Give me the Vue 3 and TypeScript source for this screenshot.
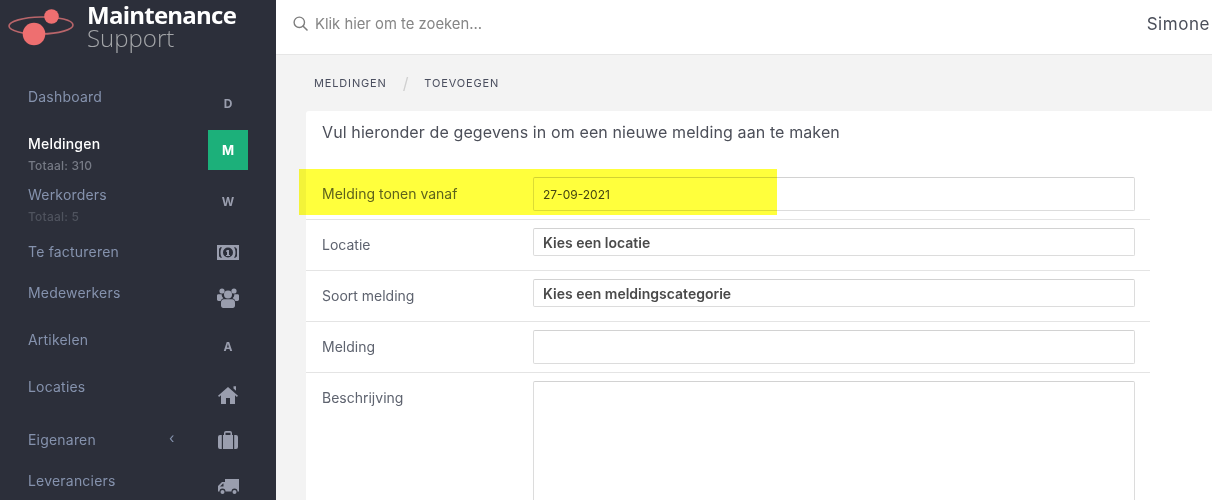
<script setup lang="ts">
interface NavItem {
  label: string
  sub?: string
  icon: string
  kind: 'letter' | 'svg'
  gap: number
  labelTop: number
  active?: boolean
  chevron?: boolean
}

const items: NavItem[] = [
  { label: 'Dashboard', icon: 'D', kind: 'letter', gap: 0, labelTop: 4 },
  { label: 'Meldingen', sub: 'Totaal: 310', icon: 'M', kind: 'letter', gap: 7, labelTop: 4, active: true },
  { label: 'Werkorders', sub: 'Totaal: 5', icon: 'W', kind: 'letter', gap: 11, labelTop: 4 },
  { label: 'Te factureren', icon: 'money', kind: 'svg', gap: 11, labelTop: 10 },
  { label: 'Medewerkers', icon: 'users', kind: 'svg', gap: 6, labelTop: 5 },
  { label: 'Artikelen', icon: 'A', kind: 'letter', gap: 8, labelTop: 4 },
  { label: 'Locaties', icon: 'home', kind: 'svg', gap: 9, labelTop: 2 },
  { label: 'Eigenaren', icon: 'case', kind: 'svg', gap: 5, labelTop: 10, chevron: true },
  { label: 'Leveranciers', icon: 'truck', kind: 'svg', gap: 7, labelTop: 4 },
]
</script>

<template>
  <div class="app">
    <aside class="sidebar">
      <div class="logo">
        <svg class="logo-mark" width="76" height="54" viewBox="0 0 76 54">
          <ellipse cx="41" cy="25.5" rx="32" ry="8.5" transform="rotate(-1 41 25.5)" fill="none" stroke="#b9656a" stroke-width="1.6" />
          <circle cx="34" cy="34" r="11.3" fill="#ee6f70" />
          <circle cx="51.5" cy="16.5" r="7.3" fill="#ee6f70" />
        </svg>
        <div class="logo-text">
          <div class="logo-top">Maintenance</div>
          <div class="logo-bottom">Support</div>
        </div>
      </div>
      <nav class="nav">
        <div
          v-for="item in items"
          :key="item.label"
          class="nav-item"
          :style="{ marginTop: item.gap + 'px' }"
        >
          <div class="nav-text" :style="{ paddingTop: item.labelTop + 'px' }">
            <div class="nav-label" :class="{ active: item.active }">{{ item.label }}</div>
            <div v-if="item.sub" class="nav-sub" :class="{ active: item.active }">{{ item.sub }}</div>
          </div>
          <span v-if="item.chevron" class="chev">‹</span>
          <div class="nav-icon" :class="{ active: item.active }">
            <template v-if="item.kind === 'letter'">{{ item.icon }}</template>
            <svg v-else-if="item.icon === 'money'" class="i-money" width="22" height="15" viewBox="0 0 22 15">
              <path fill-rule="evenodd" fill="#9a9eae" d="M0 0h22v15H0zM5 2.200H3.200A1.500 1.500 0 0 1 2 3.600v7.800c.9.1 1.400.7 1.400 1.400H5C3.900 11.400 3.500 9.500 3.500 7.500S3.900 3.600 5 2.200zM17 2.200c1.100 1.400 1.500 3.300 1.500 5.300s-.4 3.900-1.500 5.300h1.600c0-.7.5-1.300 1.400-1.400V3.600c-.9-.1-1.400-.7-1.400-1.400zM11 2.500a5 5 0 1 0 0 10 5 5 0 0 0 0-10z" />
              <path fill="#9a9eae" d="M10 5h2v5h1v1H9v-1h1V6.500L9 7V6z" />
            </svg>
            <svg v-else-if="item.icon === 'users'" class="i-users" width="22" height="20" viewBox="0 0 22 20">
              <g fill="#9a9eae">
                <circle cx="5" cy="3" r="2.600" />
                <circle cx="17" cy="3" r="2.600" />
                <circle cx="11" cy="6.500" r="4" />
                <path d="M0 7.500c0-.8.8-1.200 1.500-1.200h3.200c-.1 1.500.5 3 1.700 3.900-1.300.4-2.300 1.400-2.700 2.700H1.500C.7 12.900 0 12.300 0 11.500zM22 7.500c0-.8-.8-1.200-1.500-1.200h-3.200c.1 1.500-.5 3-1.700 3.900 1.300.4 2.300 1.400 2.700 2.700h2.200c.8 0 1.500-.6 1.500-1.400z" />
                <path d="M7 11.200h8c1.800 0 3 1.400 3 3.200v3.400c0 1.200-1 2.200-2.200 2.200H6.200C5 20 4 19 4 17.800v-3.400c0-1.800 1.200-3.200 3-3.200z" />
              </g>
            </svg>
            <svg v-else-if="item.icon === 'home'" class="i-home" width="20" height="18" viewBox="0 0 20 18">
              <path fill="#9a9eae" d="M10 1 0 9.700l1.100 1.200L3 9.300V18h5v-6h4v6h5V9.300l1.900 1.600 1.100-1.200zM15.500 .3h2.500v4.500l-2.500-2.200z" />
            </svg>
            <svg v-else-if="item.icon === 'case'" class="i-case" width="20" height="18" viewBox="0 0 20 18">
              <path fill-rule="evenodd" fill="#9a9eae" d="M6 4V2a2 2 0 0 1 2-2h4a2 2 0 0 1 2 2v2h1v14H5V4zM7.500 4h5V1.800h-5zM3.800 4v14H2a2 2 0 0 1-2-2V6a2 2 0 0 1 2-2zM16.200 4H18a2 2 0 0 1 2 2v10a2 2 0 0 1-2 2h-1.800z" />
            </svg>
            <svg v-else class="i-truck" width="21" height="16" viewBox="0 0 21 16">
              <path fill-rule="evenodd" fill="#9a9eae" d="M7 0h14v12.500h-1.500a3 3 0 0 0-6 0H7.500a3 3 0 0 0-6 0H0V7l4-4h3zM5 4.500 2 7.500h3.500v-3z" />
              <circle cx="4.500" cy="13" r="2" fill="#9a9eae" />
              <circle cx="16.500" cy="13" r="2" fill="#9a9eae" />
            </svg>
          </div>
        </div>
      </nav>
    </aside>

    <main class="main">
      <header class="topbar">
        <svg class="search-icon" width="15" height="15" viewBox="0 0 15 15">
          <circle cx="6.300" cy="6.300" r="5.200" fill="none" stroke="#7d7d7d" stroke-width="1.400" />
          <path d="M10.200 10.200 14 14" stroke="#7d7d7d" stroke-width="1.600" stroke-linecap="round" />
        </svg>
        <span class="search-text">Klik hier om te zoeken...</span>
        <span class="user">Simone</span>
      </header>

      <div class="crumbs">
        <span>MELDINGEN</span>
        <span class="slash">/</span>
        <span>TOEVOEGEN</span>
      </div>

      <section class="card">
        <h1 class="title">Vul hieronder de gegevens in om een nieuwe melding aan te maken</h1>
        <div class="form">
          <div class="row">
            <label class="row-label">Melding tonen vanaf</label>
            <input class="field" value="27-09-2021" readonly />
            <div class="marker"></div>
          </div>
          <div class="row">
            <label class="row-label">Locatie</label>
            <div class="field select">Kies een locatie</div>
          </div>
          <div class="row">
            <label class="row-label">Soort melding</label>
            <div class="field select">Kies een meldingscategorie</div>
          </div>
          <div class="row">
            <label class="row-label">Melding</label>
            <input class="field" readonly />
          </div>
          <div class="row last">
            <label class="row-label">Beschrijving</label>
            <textarea class="field area" readonly></textarea>
          </div>
        </div>
      </section>
    </main>
  </div>
</template>

<style scoped>
.app {
  display: flex;
  width: 1212px;
  height: 500px;
  overflow: hidden;
  font-family: Inter, "Liberation Sans", sans-serif;
  background: #f3f3f3;
}
.sidebar {
  width: 276px;
  flex: none;
  background: #2c2f3a;
  overflow: hidden;
}
.logo {
  display: flex;
  height: 83px;
  align-items: flex-start;
}
.logo-mark {
  flex: none;
  margin-right: 11px;
}
.logo-text {
  font-family: "Open Sans", sans-serif;
  font-size: 24px;
  line-height: 23px;
  padding-top: 3px;
}
.logo-top {
  color: #fff;
  font-weight: 700;
  letter-spacing: -0.75px;
}
.logo-bottom {
  color: #a4a6a9;
  font-weight: 300;
}
.nav {
  padding: 0 28px;
}
.nav-item {
  display: flex;
  height: 40px;
  align-items: flex-start;
  position: relative;
}
.nav-text {
  flex: 1;
}
.nav-label {
  font-size: 14px;
  line-height: 20px;
  letter-spacing: 0.2px;
  color: #8592ad;
}
.nav-label.active {
  color: #fff;
  font-weight: 500;
}
.nav-sub {
  font-size: 12px;
  line-height: 24px;
  letter-spacing: 0.2px;
  font-weight: 500;
  color: #4f535e;
}
.nav-sub.active {
  color: #767a85;
}
.chev {
  position: absolute;
  left: 141px;
  top: 8px;
  color: #8592ad;
  font-size: 14px;
  line-height: 20px;
}
.nav-icon {
  width: 40px;
  height: 40px;
  flex: none;
  display: flex;
  align-items: center;
  justify-content: center;
  font-size: 12px;
  font-weight: 700;
  color: #9a9eae;
}
.nav-icon.active {
  background: #1cb07a;
  color: #fff;
  font-size: 13px;
}
.main {
  flex: 1;
  min-width: 0;
}
.topbar {
  display: flex;
  align-items: center;
  box-sizing: border-box;
  height: 55px;
  padding: 0 0 7px 17px;
  background: #fff;
  border-bottom: 1px solid #e6e6e6;
}
.search-icon {
  flex: none;
  margin-right: 7px;
}
.search-text {
  font-size: 14.8px;
  color: #868686;
}
.user {
  margin-left: auto;
  padding-right: 2px;
  font-size: 17px;
  letter-spacing: 0.55px;
  color: #4b4f5a;
}
.crumbs {
  display: flex;
  align-items: center;
  height: 56px;
  padding-left: 38px;
  font-size: 11px;
  letter-spacing: 0.85px;
  color: #4b4f5f;
}
.slash {
  margin: 0 15px 0 16px;
  font-size: 16px;
  color: #cfcfcf;
}
.card {
  margin-left: 30px;
  background: #fff;
  border-radius: 3px 0 0 0;
  height: 400px;
}
.title {
  margin: 0;
  padding: 11px 16px 0;
  height: 58px;
  box-sizing: border-box;
  font-size: 16px;
  line-height: 20px;
  letter-spacing: 0.11px;
  font-weight: 400;
  color: #4c4f59;
}
.form {
  width: 844px;
}
.row {
  position: relative;
  display: flex;
  align-items: flex-start;
  box-sizing: border-box;
  height: 51px;
  padding: 8px 15px 0 16px;
  border-bottom: 1px solid #e4e4e4;
}
.row.last {
  height: 200px;
  border-bottom: 0;
}
.row-label {
  width: 211px;
  flex: none;
  margin-top: 7px;
  font-size: 14px;
  line-height: 20px;
  color: #5e636f;
}
.field {
  width: 602px;
  box-sizing: border-box;
  height: 34px;
  margin: 0;
  padding: 0 9px;
  border: 1px solid #dcdcdc;
  border-top-color: #d2d2d2;
  border-radius: 2px;
  background: #fff;
  font-family: inherit;
  font-size: 12px;
  color: #444;
  outline: none;
}
.select {
  height: 28px;
  line-height: 28px;
  font-size: 14px;
  font-weight: 600;
  color: #4a4a4a;
}
.area {
  display: block;
  height: 180px;
  resize: none;
}
.marker {
  position: absolute;
  left: -7px;
  top: 0;
  width: 478px;
  height: 46px;
  background: #ffff3c;
  mix-blend-mode: multiply;
}
</style>
